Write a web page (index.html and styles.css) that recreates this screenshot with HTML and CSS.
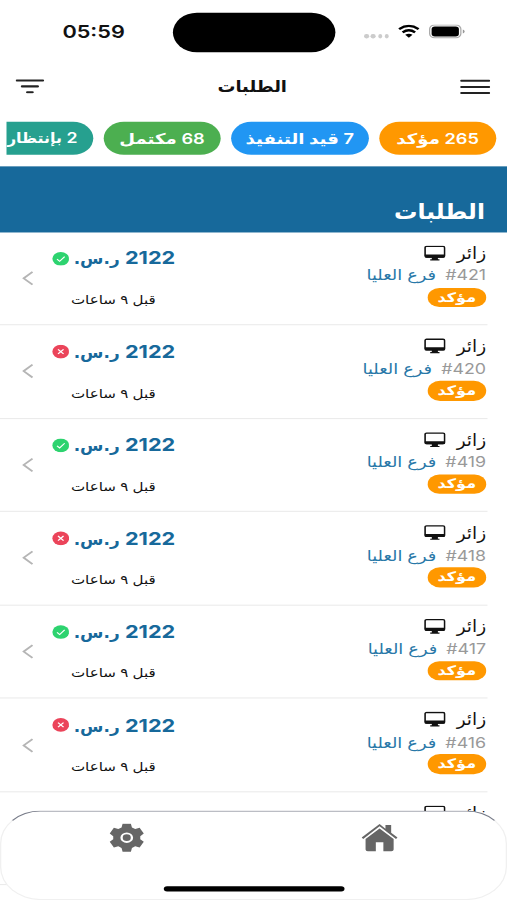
FILE: index.html
```
<!DOCTYPE html>
<html lang="ar" dir="rtl">
<head>
  <meta charset="UTF-8" />
  <meta name="viewport" content="width=device-width, initial-scale=1.0"/>
  <title>الطلبات</title>
  <link rel="stylesheet" href="styles.css">
</head>
<body>

  <svg width="0" height="0" style="display: none;">
    <symbol id="monitor" viewBox="0 0 18 16">
      <rect x="1" y="1.2" width="16" height="10.6" rx="1.2" fill="#fff" stroke="#111" stroke-width="1.3"/>
      <path d="M.8 9.3h16.4v1.6q0 1.5-1.5 1.5H2.3q-1.5 0-1.5-1.5zM6.5 12h5v2h1.3v1.2H5.2V14h1.3z" fill="#111"/>
    </symbol>
    <symbol id="paid" viewBox="0 0 14 14">
      <circle cx="7" cy="7" r="6.7" fill="#2dd36f"/>
      <path d="M4 7.3l2.1 2.1 4-4.6" fill="none" stroke="#fff" stroke-width="1"/>
    </symbol>
    <symbol id="unpaid" viewBox="0 0 14 14">
      <circle cx="7" cy="7" r="6.7" fill="#eb445a"/>
      <path d="M4.800 4.800l4.400 4.400M9.200 4.800L4.800 9.200" fill="none" stroke="#fff" stroke-width="1.1"/>
    </symbol>
    <symbol id="chevron" viewBox="0 0 9 14">
      <path d="M8 1L1.2 7 8 13" fill="none" stroke="#b5b5b5" stroke-width="1.6"/>
    </symbol>
  </svg>

  <div class="screen">
    <div class="status-bar" dir="ltr">
      <div class="clock">05:59</div>
      <div class="island"></div>
      <div class="signals">
        <span class="dots"><i></i><i></i><i></i><i></i></span>
        <svg width="17" height="13" viewBox="0 0 17 13">
          <path d="M1 4.3Q8.5-1.6 16 4.3M3.7 7.3Q8.5 3.4 13.3 7.3" fill="none" stroke="#000" stroke-width="2.1"/>
          <path d="M8.5 12.4L5.7 9.7Q8.5 7.6 11.3 9.7z"/>
        </svg>
        <svg class="battery" width="28" height="13" viewBox="0 0 28 13">
          <rect x=".5" y=".5" width="24" height="12" rx="3.8" fill="none" stroke="#aaa"/>
          <rect x="2" y="1.8" width="21" height="9.4" rx="2.5"/>
          <path d="M26 4.7q1.4.5 1.4 1.8T26 8.3z" fill="#999"/>
        </svg>
      </div>
    </div>

    <header class="toolbar">
      <svg width="23" height="15" viewBox="0 0 23 15">
        <path d="M.8 1.7h21.4M.8 7.5h21.4M.8 13.3h21.4" stroke="#222" stroke-width="1.9" stroke-linecap="round"/>
      </svg>
      <h1>الطلبات</h1>
      <svg width="22" height="14" viewBox="0 0 22 14">
        <path d="M1 1.5h20M5 7h12M9 12.5h4" stroke="#222" stroke-width="2" stroke-linecap="round"/>
      </svg>
    </header>

    <div class="chips">
      <span class="chip confirmed">265 مؤكد</span>
      <span class="chip progress">7 قيد التنفيذ</span>
      <span class="chip done">68 مكتمل</span>
      <span class="chip waiting">2 بإنتظار</span>
    </div>

    <div class="banner">الطلبات</div>

    <div class="orders" id="orders"></div>

    <nav class="tabs">
      <svg width="28" height="27" viewBox="0 0 28 27" fill="#666">
        <path d="M14 2.8L26.600 14.800l1.200-1.400L22.900 9V1.600h-4.400v3.500L14 .6.200 13.400l1.200 1.400z"/>
        <path d="M14 5L3.200 14.800v9.700q0 1.700 1.700 1.700h6.200v-8.300h5.800v8.300h6.200q1.700 0 1.700-1.700v-9.700z"/>
      </svg>
      <svg width="27" height="27" viewBox="0 0 27 27">
        <path d="M10.300.4h6.400l.8 3.500 2.500 1.500 3.400-1.200 3.200 5.500-2.700 2.400v2.800l2.700 2.400-3.200 5.500-3.400-1.200-2.500 1.500-.8 3.500h-6.400l-.8-3.500L7 21.600l-3.400 1.200-3.200-5.500 2.700-2.400v-2.800L.4 9.700l3.200-5.500L7 5.400l2.500-1.500z" fill="#666"/>
        <circle cx="13.5" cy="13.5" r="4" fill="none" stroke="#fff" stroke-width="1.8"/>
      </svg>
      <div class="home-indicator"></div>
    </nav>
  </div>

  <script src="script.js"></script>
</body>
</html>
```

FILE: styles.css
```
* {
  box-sizing: border-box;
}

body {
  margin: 0;
  width: 507px;
  height: 900px;
  overflow: hidden;
  background-color: #fff;
  font-family: Inter, 'DejaVu Sans', sans-serif;
  color: #111;
}

svg {
  display: block;
  flex: none;
}

/* phone layout is 390x844, stretched to the window */
.screen {
  position: relative;
  width: 390px;
  height: 844px;
  margin-right: 117px;
  overflow: hidden;
  transform: scale(1.3, 1.0664);
  transform-origin: 0 0;
}

.status-bar {
  display: grid;
  grid-template-columns: 133px 125px 132px;
  height: 60px;
  padding-top: 11.5px;
  align-items: start;
}

.clock {
  padding-left: 48px;
  font-size: 16.7px;
  font-weight: 600;
  line-height: 37px;
}

.island {
  height: 37px;
  border-radius: 19px;
  background-color: #000;
}

.signals {
  display: flex;
  align-items: center;
  height: 36px;
  padding-left: 22px;
}

.dots {
  display: flex;
  gap: 1.7px;
  margin: 9px 6.7px 0 0;
}

.dots i {
  width: 3.6px;
  height: 4px;
  border-radius: 50%;
  background-color: #ccc;
}

.battery {
  margin-left: 7px;
}

.toolbar {
  display: flex;
  justify-content: space-between;
  align-items: center;
  height: 42px;
  padding: 0 13px 0 12px;
}

.toolbar h1 {
  margin: 0;
  font-family: 'DejaVu Sans Condensed', 'DejaVu Sans', sans-serif;
  font-size: 15.3px;
  font-weight: 700;
}

.chips {
  display: flex;
  gap: 8px;
  height: 54px;
  margin-left: 4.6px;
  padding: 12px 8.2px 0 0;
  overflow: hidden;
}

.chip {
  flex: none;
  height: 31px;
  border-radius: 16px;
  color: #fff;
  font-size: 14px;
  font-weight: 600;
  line-height: 31px;
  text-align: center;
  white-space: nowrap;
}

.confirmed {
  width: 90px;
  background-color: #ff9800;
}

.progress {
  width: 106px;
  background-color: #2196f3;
}

.done {
  width: 90px;
  background-color: #4caf50;
}

.waiting {
  width: 82px;
  padding-right: 12px;
  background-color: #26a08f;
  font-family: Inter, 'DejaVu Sans Condensed', 'DejaVu Sans', sans-serif;
  font-size: 13.6px;
  text-align: right;
}

.banner {
  height: 61.5px;
  padding: 28px 17px 0 0;
  background-color: #17699b;
  color: #fff;
  font-family: 'DejaVu Sans Condensed', 'DejaVu Sans', sans-serif;
  font-size: 20px;
  font-weight: 700;
  line-height: 28px;
}

.order {
  display: flex;
  justify-content: space-between;
  height: 87.55px;
  margin-right: 15.5px;
  padding-left: 16.5px;
  border-bottom: 1px solid #ebebeb;
}

.info {
  margin-right: 0.6px;
}

.customer {
  display: flex;
  align-items: center;
  gap: 8.5px;
  height: 22px;
  margin-top: 8.5px;
  font-family: 'DejaVu Sans Condensed', 'DejaVu Sans', sans-serif;
  font-size: 15.8px;
}

.branch {
  display: flex;
  gap: 7px;
  height: 21.5px;
  font-size: 13.7px;
  line-height: 20px;
  white-space: nowrap;
}

.branch .number {
  color: #999;
}

.branch .name {
  color: #2878a8;
}

.badge {
  width: 45px;
  height: 18.7px;
  border-radius: 10px;
  background-color: #ff9800;
  color: #fff;
  font-size: 12.3px;
  font-weight: 700;
  line-height: 18px;
  text-align: center;
}

.side {
  display: flex;
  align-items: center;
  gap: 14px;
}

.payment {
  width: 95.3px;
  height: 100%;
  padding-top: 13.8px;
}

.price {
  display: flex;
  justify-content: space-between;
  align-items: center;
  height: 22px;
  color: #17699b;
  font-size: 16.7px;
  font-weight: 700;
  white-space: nowrap;
}

.currency {
  font-family: 'DejaVu Sans Condensed', 'DejaVu Sans', sans-serif;
  font-size: 14.5px;
}

.time {
  margin-top: 17.7px;
  font-size: 11.6px;
  line-height: 20px;
  text-align: center;
  white-space: nowrap;
}

.tabs {
  position: absolute;
  left: 0;
  right: 0;
  bottom: 0;
  display: flex;
  justify-content: space-around;
  height: 84px;
  padding-top: 11px;
  border: 1px solid #f0f0f0;
  border-top-color: #777b88;
  border-radius: 31px;
  background-color: #fff;
}

.home-indicator {
  position: absolute;
  left: 125px;
  bottom: 7px;
  width: 138.5px;
  height: 5px;
  border-radius: 3px;
  background-color: #000;
}
```

FILE: script.js
```
const orders = [
  { id: 421, paid: true },
  { id: 420, paid: false },
  { id: 419, paid: true },
  { id: 418, paid: false },
  { id: 417, paid: true },
  { id: 416, paid: false },
  { id: 415, paid: true }
];

document.getElementById('orders').innerHTML = orders.map(order => `
  <div class="order">
    <div class="info">
      <div class="customer">
        <span>زائر</span>
        <svg width="17" height="15"><use href="#monitor"/></svg>
      </div>
      <div class="branch">
        <span class="number" dir="ltr">#${order.id}</span>
        <span class="name">فرع العليا</span>
      </div>
      <div class="badge">مؤكد</div>
    </div>
    <div class="side">
      <div class="payment">
        <div class="price">
          <span>2122 <span class="currency">ر.س.</span></span>
          <svg width="13.5" height="13.5"><use href="#${order.paid ? 'paid' : 'unpaid'}"/></svg>
        </div>
        <div class="time">قبل ٩ ساعات</div>
      </div>
      <svg width="9" height="14"><use href="#chevron"/></svg>
    </div>
  </div>
`).join('');
```
